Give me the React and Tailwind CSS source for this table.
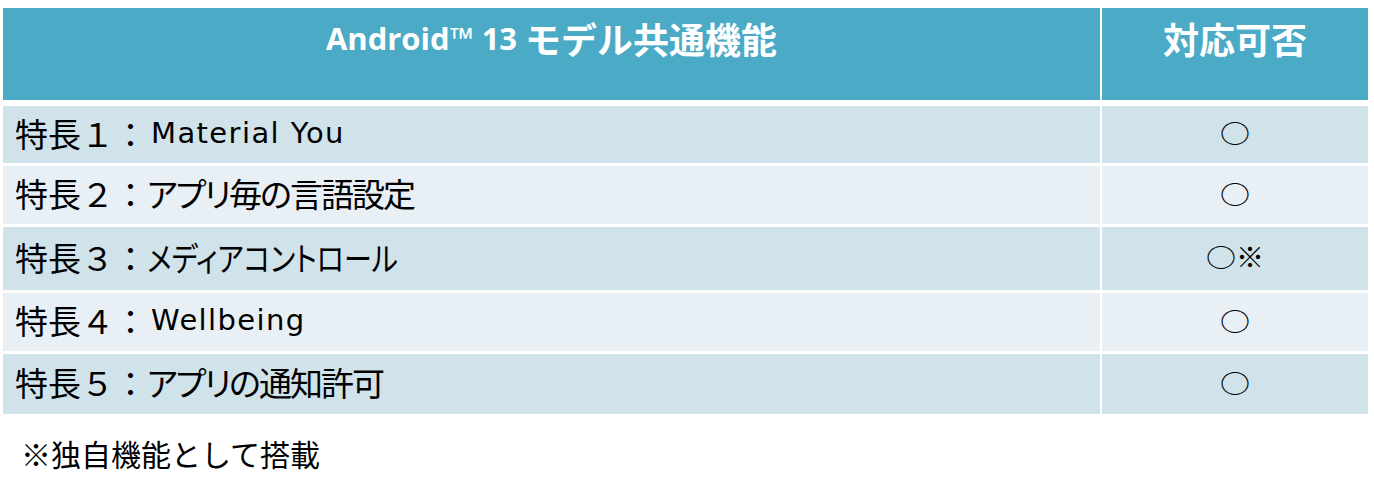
const rows = [
  { label: "特長１：", name: "Material You", latin: true, star: false, h: "h-[57px]", bg: "bg-[#d0e2ea]", fit: "" },
  { label: "特長２：", name: "アプリ毎の言語設定", star: false, h: "h-[58px]", bg: "bg-[#e8eff5]", fit: "tracking-[-2px]" },
  { label: "特長３：", name: "メディアコントロール", star: true, h: "h-[63px]", bg: "bg-[#d0e2ea]", fit: "inline-block origin-left scale-x-[0.85]" },
  { label: "特長４：", name: "Wellbeing", latin: true, star: false, h: "h-[58px]", bg: "bg-[#e8eff5]", fit: "" },
  { label: "特長５：", name: "アプリの通知許可", star: false, h: "h-[60px]", bg: "bg-[#d0e2ea]", fit: "tracking-[-2px]" },
];

const jp = "font-['Noto_Sans_CJK_JP',sans-serif]";
const latin = "font-['DejaVu_Sans','Noto_Sans_CJK_JP',sans-serif]";

function Row({ row }) {
  return (
    <div className="grid grid-cols-[1097px_266px] gap-x-[2px]">
      <div className={`${row.h} ${row.bg} flex items-center pl-[12px] pb-[3px] text-black`}>
        <span className={`${jp} text-[33px] leading-[33px]`}>{row.label}</span>
        {row.latin ? (
          <span className={`${latin} text-[29px] leading-[33px] tracking-[1.4px] ml-[4px]`}>{row.name}</span>
        ) : (
          <span className={`${jp} text-[33px] leading-[33px] [font-feature-settings:'palt'] ${row.fit}`}>{row.name}</span>
        )}
      </div>
      <div className={`${row.h} ${row.bg} flex items-center justify-center pb-[5px] text-black`}>
        <span className={`${jp} text-[30px] leading-[30px] inline-block scale-y-[0.82]`}>○</span>
        {row.star && <span className={`${jp} text-[28px] leading-[30px]`}>※</span>}
      </div>
    </div>
  );
}

export default function App() {
  return (
    <div className="w-[1374px] h-[494px] bg-white pt-[8px] pl-[3px]">
      <div className="flex flex-col">
        <div className="grid grid-cols-[1097px_266px] gap-x-[2px] h-[92px]">
          <div className="bg-[#4baac6] flex justify-center items-start pt-[10px] text-white font-bold">
            <span className="font-['Open_Sans',sans-serif] text-[31px] leading-[40px]">Android™ 13</span>
            <span className={`${jp} text-[36px] leading-[40px] ml-[8px]`}>モデル共通機能</span>
          </div>
          <div className="bg-[#4baac6] flex justify-center items-start pt-[10px] text-white font-bold">
            <span className={`${jp} text-[36px] leading-[40px]`}>対応可否</span>
          </div>
        </div>
        <div className="flex flex-col gap-[3px] mt-[6px]">
          {rows.map((row) => (
            <Row key={row.label} row={row} />
          ))}
        </div>
      </div>
      <p className={`${jp} text-[30px] leading-[30px] text-black mt-[24px] pl-[18px]`}>※独自機能として搭載</p>
    </div>
  );
}
